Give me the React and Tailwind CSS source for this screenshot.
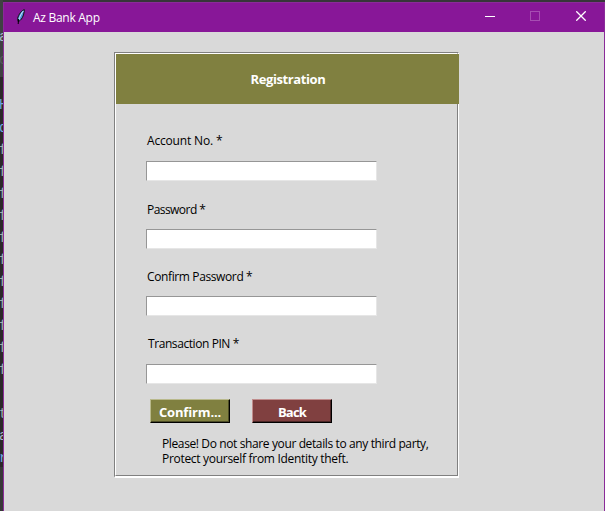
const glyphs = [
  { c: "a", top: 26, color: "text-[#a9b7c6]" },
  { c: "o", top: 49, color: "text-[#55585a]" },
  { c: "H", top: 94, color: "text-[#6fa8e0]" },
  { c: "d", top: 117, color: "text-[#6fa8e0]" },
  { c: "f", top: 139, color: "text-[#9fb0b0]" },
  { c: "f", top: 161, color: "text-[#9fb0b0]" },
  { c: "f", top: 183, color: "text-[#9fb0b0]" },
  { c: "f", top: 205, color: "text-[#9fb0b0]" },
  { c: "f", top: 227, color: "text-[#9fb0b0]" },
  { c: "f", top: 249, color: "text-[#9fb0b0]" },
  { c: "f", top: 271, color: "text-[#9fb0b0]" },
  { c: "f", top: 293, color: "text-[#9fb0b0]" },
  { c: "f", top: 315, color: "text-[#9fb0b0]" },
  { c: "f", top: 337, color: "text-[#9fb0b0]" },
  { c: "f", top: 359, color: "text-[#9fb0b0]" },
  { c: "t", top: 403, color: "text-[#9fb0b0]" },
  { c: "a", top: 425, color: "text-[#a9b7c6]" },
  { c: "r", top: 447, color: "text-[#6fa8e0]" },
];

function EditorStrip() {
  return (
    <div className="relative h-full w-[3px] shrink-0 overflow-hidden bg-[#2b2829]">
      <div className="h-[77px] bg-[#3f4142]" />
      <div className="mt-[390px] h-[44px] bg-[#383838]" />
      {glyphs.map((g) => (
        <span
          key={g.top}
          className={`absolute -left-[1px] font-['Liberation_Mono',monospace] text-[14px] leading-[22px] ${g.color}`}
          style={{ top: g.top }}
        >
          {g.c}
        </span>
      ))}
    </div>
  );
}

function Feather() {
  return (
    <svg width="10" height="16" viewBox="0 0 10 16" className="mb-[2px] shrink-0">
      <path d="M8.3 0.6 C6 1 2.4 5.5 1.6 9.5 L2 12.5 C5 12 8.2 7 8.3 0.6Z" fill="#4f94dc" stroke="#111" strokeWidth="1" />
      <path d="M7.4 2 C5.2 4.5 3.8 7.5 2.8 11" stroke="#c9e4f8" strokeWidth="1" fill="none" />
      <path d="M2.6 10 L2.2 15" stroke="#000" strokeWidth="1" fill="none" />
    </svg>
  );
}

function TitleBar() {
  return (
    <div className="flex h-[29px] shrink-0 items-center bg-[#881798] pl-[12px] text-white">
      <Feather />
      <span className="ml-[7px] text-[12px] leading-[16px] tracking-[-0.28px]">Az Bank App</span>
      <div className="mb-[3px] ml-auto flex items-center pr-[18px]">
        <svg width="10" height="10" shapeRendering="crispEdges"><path d="M0 5.5H10" stroke="#fff" /></svg>
        <svg width="10" height="10" className="ml-[35px]" shapeRendering="crispEdges"><rect x="0.5" y="0.5" width="9" height="9" fill="none" stroke="#a64db2" /></svg>
        <svg width="10" height="10" className="ml-[36px]"><path d="M0.3 0.3L9.7 9.7M9.7 0.3L0.3 9.7" stroke="#fff" strokeWidth="1.3" /></svg>
      </div>
    </div>
  );
}

function Field({ label, className, labelClass }) {
  return (
    <label className={`flex flex-col ${className}`}>
      <span className={`text-[12px] leading-[16px] whitespace-nowrap ${labelClass}`}>{label}</span>
      <input className="mt-auto h-[20px] w-[231px] border border-t-[#969696] border-r-[#e6e6e6] border-b-[#e6e6e6] border-l-[#969696] bg-white outline-none" />
    </label>
  );
}

function Button({ children, className }) {
  return (
    <button className={`h-[24px] w-[80px] border border-r-black border-b-black pt-[2px] text-[13px] leading-[20px] font-bold text-white ${className}`}>
      {children}
    </button>
  );
}

export default function App() {
  return (
    <div className="flex h-[511px] w-[605px] overflow-hidden bg-[#373539] font-['Open_Sans','Noto_Sans',sans-serif] text-black">
      <EditorStrip />
      <div className="mt-[2px] flex flex-1 flex-col border-x border-t border-[#8b2b99] bg-[#d9d9d9]">
        <TitleBar />
        <div className="mt-[20px] ml-[110px] h-[426px] w-[345px] border-t border-r border-b-2 border-l border-t-[#808080] border-r-white border-b-white border-l-[#808080]">
          <div className="h-[423px] w-[343px] border border-t-white border-r-[#808080] border-b-[#808080] border-l-white">
            <div className="flex h-[50px] w-[343px] items-center justify-center bg-[#808040] pt-[2px] text-[13px] font-bold tracking-[-0.4px] text-white">
              <span className="ml-px">Registration</span>
            </div>
            <div className="flex flex-col pl-[30px]">
              <Field label="Account No. *" className="mt-[29px] h-[48px]" labelClass="ml-[1px] tracking-[-0.17px]" />
              <Field label="Password *" className="mt-[21px] h-[47px]" labelClass="ml-[1px] tracking-[-0.55px]" />
              <Field label="Confirm Password *" className="mt-[20px] h-[47px]" labelClass="ml-[1px] tracking-[-0.38px]" />
              <Field label="Transaction PIN *" className="mt-[20px] h-[48px]" labelClass="ml-[2px] tracking-[-0.42px]" />
              <div className="mt-[15px] ml-[4px] flex gap-[22px]">
                <Button className="border-t-[#b9b98c] border-l-[#b9b98c] bg-[#808040] tracking-[-0.15px] shadow-[inset_-1px_-1px_0_#4c4c26]">Confirm...</Button>
                <Button className="border-t-[#c08c8c] border-l-[#c08c8c] bg-[#804040] tracking-[-0.8px] shadow-[inset_-1px_-1px_0_#4c2626]">Back</Button>
              </div>
              <p className="mt-[13px] ml-[16px] text-[12px] leading-[15px] whitespace-nowrap">
                <span className="block tracking-[-0.38px]">Please! Do not share your details to any third party,</span>
                <span className="block tracking-[-0.3px]">Protect yourself from Identity theft.</span>
              </p>
            </div>
          </div>
        </div>
      </div>
    </div>
  );
}
